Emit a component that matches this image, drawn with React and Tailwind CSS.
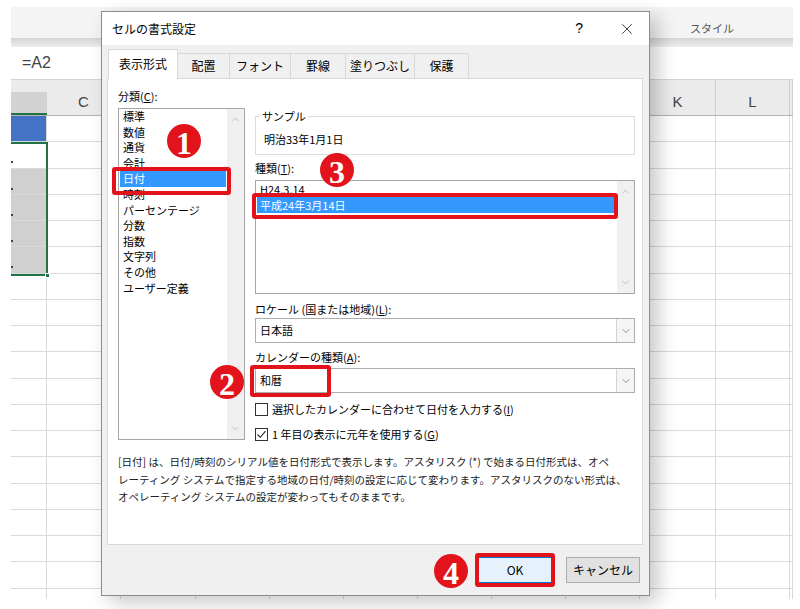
import { X, ChevronUp, ChevronDown } from "lucide-react";

const colWidths = ["w-[36px]", "w-[74px]", "w-[75px]", "w-[74px]", "w-[74px]", "w-[74px]", "w-[74px]", "w-[74px]", "w-[74px]", "w-[76px]", "w-[74px]", "w-[3px]"];
const colNames = ["", "C", "D", "E", "F", "G", "H", "I", "J", "K", "L", ""];

const categories = ["標準", "数値", "通貨", "会計", "日付", "時刻", "パーセンテージ", "分数", "指数", "文字列", "その他", "ユーザー定義"];

const tabs = [
  { label: "表示形式", w: "w-[70px]", active: true },
  { label: "配置", w: "w-[52px]" },
  { label: "フォント", w: "w-[61px]" },
  { label: "罫線", w: "w-[55px]" },
  { label: "塗りつぶし", w: "w-[69px]" },
  { label: "保護", w: "w-[54px]" },
];

function cellBg(r, c) {
  if (c !== 0) return "bg-white";
  if (r === 0) return "bg-[#4472c4]";
  if (r >= 2 && r <= 5) return "bg-[#d0d0d0]";
  return "bg-white";
}

function Sheet() {
  return (
    <div className="relative ml-[11px] mt-[7px] flex h-[592px] w-[782px] flex-col overflow-hidden">
      {/* ribbon */}
      <div className="flex h-[31px] shrink-0 items-end bg-[#f4f4f4] pb-[2px] pl-[679px] text-[11px] text-[#555]">
        スタイル
      </div>
      <div className="h-[9px] shrink-0 bg-gradient-to-b from-[#d4d4d4] to-[#efefef]" />
      {/* formula bar */}
      <div className="flex h-[33px] shrink-0 items-center border-b border-[#d4d4d4] bg-white pl-[11px] font-['Liberation_Sans',sans-serif] text-[16px] text-[#444]">
        =A2
      </div>
      {/* column headers */}
      <div className="flex h-[36px] shrink-0 border-b border-[#b4b4b4] bg-[#ebebeb]">
        {colWidths.map((w, c) =>
          c === 0 ? (
            <div key={c} className={`${w} flex shrink-0 flex-col`}>
              <div className="h-[12px]" />
              <div className="flex-1 border-b-2 border-[#217346] bg-[#d3d3d3]" />
            </div>
          ) : (
            <div key={c} className={`${w} flex shrink-0 items-center justify-center border-r border-[#d0d0d0] pt-[10px] font-['Liberation_Sans',sans-serif] text-[15px] text-[#444]`}>
              {colNames[c]}
            </div>
          )
        )}
      </div>
      {/* rows */}
      {Array.from({ length: 19 }).map((_, r) => (
        <div key={r} className="flex h-[26.25px] shrink-0">
          {colWidths.map((w, c) => (
            <div key={c} className={`${w} shrink-0 border-b border-r border-[#dadada] ${cellBg(r, c)}`}>
              {c === 0 && r >= 1 && r <= 5 && <div className="mt-[19px] h-[2px] w-[2px] bg-[#444]" />}
            </div>
          ))}
        </div>
      ))}
      {/* selection border */}
      <div className="absolute left-[-3px] top-[135px] h-[134px] w-[40px] border-2 border-[#217346]" />
      <div className="absolute left-[34px] top-[266px] h-[5px] w-[5px] border border-white bg-[#217346]" />
    </div>
  );
}

function ScrollBar() {
  return (
    <div className="flex w-[17px] shrink-0 flex-col items-center justify-between bg-[#f0f0f0] py-[5px] text-[#a6a6a6]">
      <ChevronUp className="h-[11px] w-[11px]" strokeWidth={1.5} />
      <ChevronDown className="h-[11px] w-[11px]" strokeWidth={1.5} />
    </div>
  );
}

function Select({ value }) {
  return (
    <div className="flex h-[25px] items-center border border-[#adadad] bg-white">
      <span className="flex-1 pl-[4px]">{value}</span>
      <div className="flex h-full w-[18px] items-center justify-center border-l border-[#d4d4d4] bg-[#f5f5f5] text-[#606060]">
        <ChevronDown className="h-[12px] w-[12px]" strokeWidth={1.3} />
      </div>
    </div>
  );
}

function Dialog() {
  return (
    <div className="absolute left-[101px] top-[11px] flex h-[585px] w-[549px] flex-col border border-[#8c8c8c] bg-[#f0f0f0] shadow-[8px_6px_18px_rgba(0,0,0,0.22)]">
      {/* title bar */}
      <div className="flex h-[33px] shrink-0 items-center bg-white pl-[10px] pr-[13px]">
        <span className="text-[12px]">セルの書式設定</span>
        <span className="ml-auto mr-[35px] font-['Liberation_Sans',sans-serif] text-[14px]">?</span>
        <X className="h-[18px] w-[18px] text-[#222]" strokeWidth={1.1} />
      </div>

      {/* tabs */}
      <div className="flex h-[33px] shrink-0 items-end pl-[6px] text-[12px]">
        {tabs.map((t) =>
          t.active ? (
            <div key={t.label} className={`${t.w} relative z-10 -mb-px flex h-[30px] items-center justify-center border-x border-t border-[#d9d9d9] bg-white pb-[2px]`}>
              {t.label}
            </div>
          ) : (
            <div key={t.label} className={`${t.w} flex h-[25px] items-center justify-center border-r border-t border-[#d9d9d9] bg-[#f0f0f0]`}>
              {t.label}
            </div>
          )
        )}
      </div>

      {/* panel */}
      <div className="mx-[5px] flex h-[467px] w-[536px] shrink-0 flex-col border border-[#d9d9d9] bg-white pl-[10px] pr-[7px] pt-[9px] text-[11px]">
        <div className="flex">
          {/* category list */}
          <div className="flex w-[127px] flex-col">
            <div className="leading-[16px]">分類(<u>C</u>):</div>
            <div className="mt-[4px] flex h-[332px] border border-[#a6a6a6] bg-white">
              <div className="flex-1 px-[1px]">
                {categories.map((c) => (
                  <div key={c} className={`pl-[3px] leading-[15.6px] ${c === "日付" ? "bg-[#3399ff] text-white" : ""}`}>
                    {c}
                  </div>
                ))}
              </div>
              <ScrollBar />
            </div>
          </div>

          {/* right column */}
          <div className="ml-[10px] flex w-[380px] flex-col pt-[20px]">
            <fieldset className="border border-[#dcdcdc] pb-[7px] pl-[4px]">
              <legend className="px-[2px] leading-[16px]">サンプル</legend>
              <div className="pl-[4px] pt-[7px] leading-[16px]">明治33年1月1日</div>
            </fieldset>

            <div className="mt-[5px] leading-[16px]">種類(<u>T</u>):</div>
            <div className="mt-[4px] flex h-[114px] border border-[#a6a6a6] bg-white">
              <div className="flex-1 px-[1px]">
                <div className="pl-[3px] leading-[16px]">H24.3.14</div>
                <div className="bg-[#3399ff] pl-[3px] leading-[16px] text-white">平成24年3月14日</div>
              </div>
              <ScrollBar />
            </div>

            <div className="mt-[7px] leading-[16px]">ロケール (国または地域)(<u>L</u>):</div>
            <div className="mt-[1px]">
              <Select value="日本語" />
            </div>

            <div className="mt-[6px] leading-[16px]">カレンダーの種類(<u>A</u>):</div>
            <div className="mt-[3px]">
              <Select value="和暦" />
            </div>

            <div className="mt-[8px] flex h-[16px] items-center gap-[4px]">
              <span className="h-[13px] w-[13px] shrink-0 border border-[#333] bg-white" />
              <span>選択したカレンダーに合わせて日付を入力する(<u>I</u>)</span>
            </div>
            <div className="mt-[9px] flex h-[16px] items-center gap-[4px]">
              <span className="flex h-[13px] w-[13px] shrink-0 items-center justify-center border border-[#333] bg-white">
                <svg viewBox="0 0 11 11" className="h-[11px] w-[11px]">
                  <polyline points="1.5,5.5 4.3,8.3 9.5,2.2" fill="none" stroke="#222" strokeWidth="1.1" />
                </svg>
              </span>
              <span>1 年目の表示に元年を使用する(<u>G</u>)</span>
            </div>
          </div>
        </div>

        <div className="mt-[11px] whitespace-nowrap text-[10.5px] leading-[17.5px] text-[#222]">
          <div>[日付] は、日付/時刻のシリアル値を日付形式で表示します。アスタリスク (*) で始まる日付形式は、オペ</div>
          <div>レーティング システムで指定する地域の日付/時刻の設定に応じて変わります。アスタリスクのない形式は、</div>
          <div>オペレーティング システムの設定が変わってもそのままです。</div>
        </div>
      </div>

      {/* buttons */}
      <div className="flex flex-1 items-start justify-end gap-[14px] pr-[9px] pt-[12px] text-[12px]">
        <button className="flex h-[26px] w-[74px] items-center justify-center border border-[#0078d7] bg-[#e5f1fb]">
          OK
        </button>
        <button className="flex h-[26px] w-[74px] items-center justify-center border border-[#adadad] bg-[#e1e1e1]">
          キャンセル
        </button>
      </div>
    </div>
  );
}

function RedBox({ className }) {
  return <div className={`absolute rounded-[3px] border-[4px] border-[#e3131b] ${className}`} />;
}

function Badge({ n, className }) {
  return (
    <div className={`absolute flex h-[34px] w-[34px] items-center justify-center rounded-full bg-[#e3131b] pt-[3px] font-['Liberation_Serif',serif] text-[32px] font-bold leading-none text-white ${className}`}>
      {n}
    </div>
  );
}

export default function App() {
  return (
    <div className="relative h-[609px] w-[800px] overflow-hidden bg-white font-['Noto_Sans_CJK_JP','Noto_Sans',sans-serif] text-black">
      <Sheet />
      <Dialog />

      <RedBox className="left-[112px] top-[167px] h-[28px] w-[119px]" />
      <RedBox className="left-[252px] top-[193px] h-[26px] w-[366px]" />
      <RedBox className="left-[250px] top-[365px] h-[32px] w-[81px]" />
      <RedBox className="left-[475px] top-[553px] h-[34px] w-[80px]" />

      <Badge n="1" className="left-[167px] top-[124px]" />
      <Badge n="2" className="left-[210px] top-[365px]" />
      <Badge n="3" className="left-[320px] top-[153px]" />
      <Badge n="4" className="left-[434px] top-[554px]" />
    </div>
  );
}
